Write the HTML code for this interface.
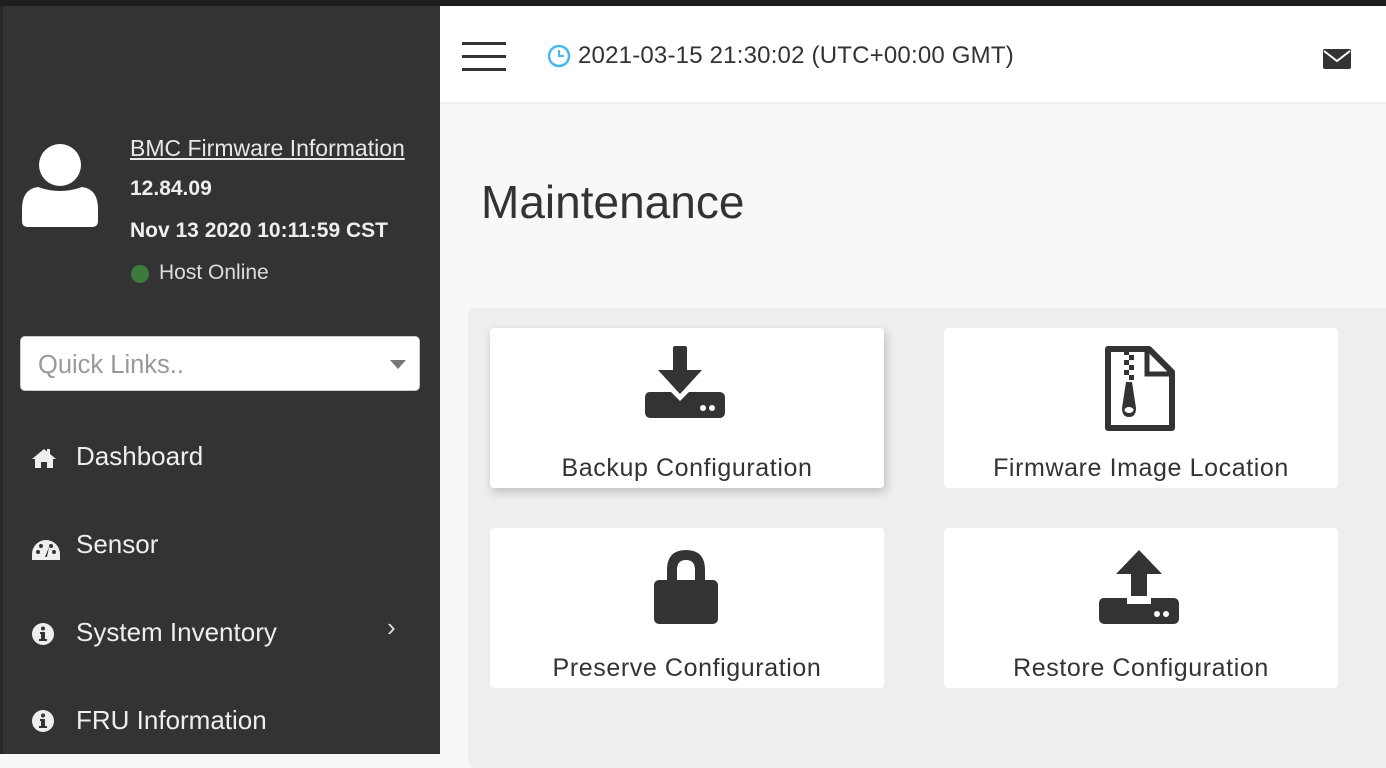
<!DOCTYPE html>
<html><head><meta charset="utf-8"><style>
*{margin:0;padding:0;box-sizing:border-box}
body{width:1386px;height:754px;overflow:hidden;background:#f8f8f8;font-family:"Liberation Sans",sans-serif;position:relative}
.top{position:absolute;left:0;top:0;width:1386px;height:6px;background:#1e1e1e}
.side{position:absolute;left:0;top:6px;width:440px;height:748px;background:#333;border-left:3px solid #282828}
.hdr{position:absolute;left:440px;top:6px;width:946px;height:98px;background:#fff;border-bottom:2px solid #eee}
.t{position:absolute;white-space:nowrap}
.panel{position:absolute;left:468px;top:308px;width:930px;height:460px;background:#eee;border-radius:6px}
.card{position:absolute;width:394px;height:160px;background:#fff;border-radius:4px}
.card .lbl{position:absolute;left:0;right:0;top:126px;text-align:center;font-size:25px;color:#333;letter-spacing:0.6px}
.card svg{position:absolute}
.nav{position:absolute;left:76px;font-size:26px;color:#eee}
</style></head><body>
<div class="top"></div>
<div class="side">
  <svg style="position:absolute;left:17px;top:137px" width="80" height="86" viewBox="0 0 80 86"><circle cx="40" cy="22" r="21" fill="#fff"/><path d="M2 66 Q2 46 18 44 Q40 52 62 44 Q78 46 78 66 L78 78 Q78 84 72 84 L8 84 Q2 84 2 78Z" fill="#fff"/></svg>
  <div class="t" style="left:127px;top:129px;font-size:23px;color:#e8e8e8;text-decoration:underline">BMC Firmware Information</div>
  <div class="t" style="left:127px;top:171px;font-size:21px;color:#eee;font-weight:bold">12.84.09</div>
  <div class="t" style="left:127px;top:213px;font-size:21px;color:#eee;font-weight:bold">Nov 13 2020 10:11:59 CST</div>
  <div style="position:absolute;left:128px;top:259px;width:18px;height:18px;border-radius:50%;background:#3d7b3d"></div>
  <div class="t" style="left:156px;top:255px;font-size:21px;color:#ddd">Host Online</div>
  <div style="position:absolute;left:17px;top:330px;width:400px;height:55px;background:#fff;border-radius:5px;border:1px solid #ccc"></div>
  <div class="t" style="left:35px;top:345px;font-size:25.5px;color:#999">Quick Links..</div>
  <div style="position:absolute;left:387px;top:354px;width:0;height:0;border-left:8px solid transparent;border-right:8px solid transparent;border-top:9px solid #777"></div>
  <svg style="position:absolute;left:27px;top:441px" width="28" height="22" viewBox="0 0 28 22"><path d="M14 2 L2 12 L5 12 L5 21 L11 21 L11 15 L17 15 L17 21 L23 21 L23 12 L26 12 L20 7 L20 2 L17 2 L17 4.5Z" fill="#eee"/></svg>
  <div class="nav t" style="left:73px;top:435px">Dashboard</div>
  <svg style="position:absolute;left:27px;top:532px" width="32" height="24" viewBox="0 0 32 24"><path d="M16 2 A14 14 0 0 0 2 16 L2 22 L30 22 L30 16 A14 14 0 0 0 16 2Z" fill="#eee"/><circle cx="8" cy="14" r="2" fill="#333"/><circle cx="11" cy="8" r="2" fill="#333"/><circle cx="21" cy="8" r="2" fill="#333"/><circle cx="24" cy="14" r="2" fill="#333"/><path d="M15 19 L19 9 L17 19Z" fill="#333"/></svg>
  <div class="nav t" style="left:73px;top:523px">Sensor</div>
  <svg style="position:absolute;left:28px;top:616px" width="24" height="24" viewBox="0 0 24 24"><circle cx="12" cy="12" r="11" fill="#eee"/><circle cx="12" cy="6.5" r="2" fill="#333"/><path d="M9 10 L14 10 L14 17 L16 17 L16 19 L8 19 L8 17 L10 17 L10 12 L9 12Z" fill="#333"/></svg>
  <div class="nav t" style="left:73px;top:611px">System Inventory</div>
  <div class="t" style="left:384px;top:606px;font-size:26px;color:#ddd">›</div>
  <svg style="position:absolute;left:28px;top:703px" width="24" height="24" viewBox="0 0 24 24"><circle cx="12" cy="12" r="11" fill="#eee"/><circle cx="12" cy="6.5" r="2" fill="#333"/><path d="M9 10 L14 10 L14 17 L16 17 L16 19 L8 19 L8 17 L10 17 L10 12 L9 12Z" fill="#333"/></svg>
  <div class="nav t" style="left:73px;top:699px">FRU Information</div>
</div>
<div class="hdr">
  <div style="position:absolute;left:22px;top:36px;width:44px;height:3px;background:#333"></div>
  <div style="position:absolute;left:22px;top:49px;width:44px;height:3px;background:#333"></div>
  <div style="position:absolute;left:22px;top:62px;width:44px;height:3px;background:#333"></div>
  <svg style="position:absolute;left:107px;top:38px" width="24" height="24" viewBox="0 0 24 24"><circle cx="12" cy="12" r="10" fill="none" stroke="#4ab8f0" stroke-width="2.5"/><path d="M12 6 L12 12 L17 12" fill="none" stroke="#4ab8f0" stroke-width="2"/></svg>
  <div class="t" style="left:138px;top:36px;font-size:24px;color:#333;letter-spacing:0.2px">2021-03-15 21:30:02 (UTC+00:00 GMT)</div>
  <svg style="position:absolute;left:882px;top:42px" width="30" height="22" viewBox="0 0 30 22"><rect x="1" y="1" width="28" height="20" rx="2" fill="#333"/><path d="M2 3 L15 13 L28 3" fill="none" stroke="#fff" stroke-width="2"/></svg>
</div>
<div class="t" style="left:481px;top:175px;font-size:46px;color:#333">Maintenance</div>
<div class="panel"></div>
<div class="card" style="left:490px;top:328px;box-shadow:2px 4px 10px rgba(0,0,0,0.2)">
  <svg style="left:155px;top:16px" width="80" height="76" viewBox="0 0 80 76"><rect x="28" y="2" width="14" height="26" rx="2" fill="#333"/><path d="M13 26 L57 26 L35 50Z" fill="#333"/><path d="M5 48 L26 48 L35 57 L44 48 L74 48 Q80 48 80 54 L80 68 Q80 74 74 74 L6 74 Q0 74 0 68 L0 54 Q0 48 5 48Z" fill="#333"/><circle cx="58" cy="64" r="3" fill="#fff"/><circle cx="67" cy="64" r="3" fill="#fff"/></svg>
  <div class="lbl">Backup Configuration</div>
</div>
<div class="card" style="left:944px;top:328px">
  <svg style="left:158px;top:16px" width="76" height="90" viewBox="0 0 76 90">
    <path d="M6 5 L47 5 L70 28 L70 84 L6 84Z" fill="none" stroke="#333" stroke-width="6" stroke-linejoin="round"/>
    <path d="M45 5 L45 30 L70 30" fill="none" stroke="#333" stroke-width="5"/>
    <rect x="22" y="6" width="5" height="5" fill="#333"/><rect x="27" y="11" width="5" height="5" fill="#333"/>
    <rect x="22" y="16" width="5" height="5" fill="#333"/><rect x="27" y="21" width="5" height="5" fill="#333"/>
    <rect x="22" y="26" width="5" height="5" fill="#333"/><rect x="27" y="31" width="5" height="5" fill="#333"/>
    <path d="M24 38 L30 38 L34 64 Q34 73 27 73 Q20 73 20 64Z" fill="#333"/>
    <ellipse cx="27" cy="66" rx="4.5" ry="3" fill="#fff"/>
  </svg>
  <div class="lbl">Firmware Image Location</div>
</div>
<div class="card" style="left:490px;top:528px">
  <svg style="left:163px;top:20px" width="66" height="78" viewBox="0 0 66 78"><path d="M14 34 L14 22 Q14 2 33 2 Q52 2 52 22 L52 34 L42 34 L42 22 Q42 12 33 12 Q24 12 24 22 L24 34Z" fill="#333"/><rect x="1" y="32" width="64" height="44" rx="5" fill="#333"/></svg>
  <div class="lbl">Preserve Configuration</div>
</div>
<div class="card" style="left:944px;top:528px">
  <svg style="left:155px;top:20px" width="80" height="78" viewBox="0 0 80 78"><path d="M40 2 L63 26 L48 26 L48 48 L32 48 L32 26 L17 26Z" fill="#333"/><path d="M5 50 L28 50 L28 56 L52 56 L52 50 L74 50 Q80 50 80 56 L80 70 Q80 76 74 76 L6 76 Q0 76 0 70 L0 56 Q0 50 5 50Z" fill="#333"/><circle cx="58" cy="66" r="3" fill="#fff"/><circle cx="67" cy="66" r="3" fill="#fff"/></svg>
  <div class="lbl">Restore Configuration</div>
</div>
</body></html>
